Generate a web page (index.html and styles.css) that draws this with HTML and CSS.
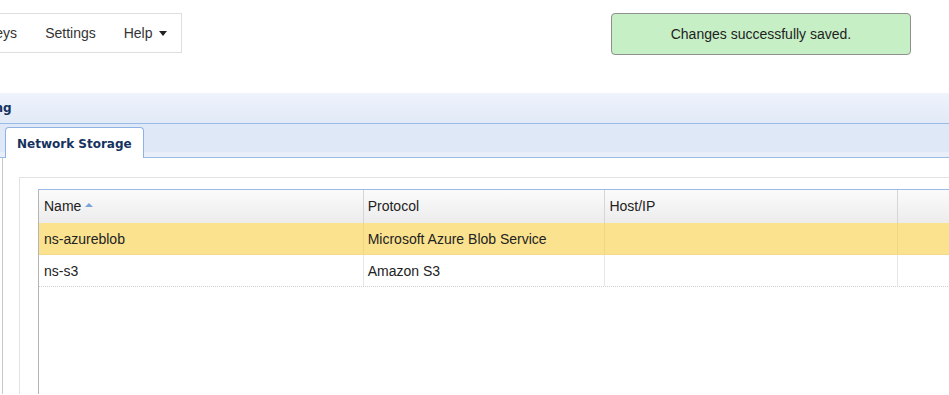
FILE: index.html
```html
<!doctype html>
<html>
<head>
    <meta charset="utf-8">
    <title>Network Storage</title>
    <link rel="stylesheet" href="styles.css">
</head>
<body>
    <div class="topbar">
        <ul class="menu">
            <li>Keys</li>
            <li>Settings</li>
            <li>Help <span class="caret"></span></li>
        </ul>
        <div class="notice">Changes successfully saved.</div>
    </div>

    <div class="panel-head"><span class="title">Tiering</span></div>
    <div class="tabstrip">
        <div class="tab">Network Storage</div>
    </div>

    <div class="panel-body">
        <div class="box">
            <div class="grid">
                <div class="grid-head">
                    <div class="cell c1">Name<span class="sort"></span></div>
                    <div class="cell c2">Protocol</div>
                    <div class="cell c3">Host/IP</div>
                    <div class="cell c4"></div>
                </div>
                <div class="row selected">
                    <div class="cell c1">ns-azureblob</div>
                    <div class="cell c2">Microsoft Azure Blob Service</div>
                    <div class="cell c3"></div>
                    <div class="cell c4"></div>
                </div>
                <div class="row">
                    <div class="cell c1">ns-s3</div>
                    <div class="cell c2">Amazon S3</div>
                    <div class="cell c3"></div>
                    <div class="cell c4"></div>
                </div>
            </div>
        </div>
    </div>
</body>
</html>
```

FILE: styles.css
```css
html, body {
    margin: 0;
    padding: 0;
}
body {
    background-color: white;
    font-family: "Liberation Sans", Arial, sans-serif;
    font-size: 14px;
    color: #222;
    overflow: hidden;
    height: 395px;
}
.topbar {
    display: flex;
    justify-content: space-between;
    align-items: flex-start;
    box-sizing: border-box;
    height: 93px;
    padding-top: 13px;
}
.menu {
    display: flex;
    list-style: none;
    margin: 0 0 0 -29px;
    padding: 0;
    border: 1px solid #dedede;
    height: 38px;
    color: #333;
}
.menu li {
    padding: 0 14px;
    line-height: 38px;
    display: flex;
    align-items: center;
}
.caret {
    display: inline-block;
    margin-left: 6px;
    width: 0;
    height: 0;
    border-left: 4px solid transparent;
    border-right: 4px solid transparent;
    border-top: 5px solid #222;
}
.notice {
    width: 300px;
    height: 42px;
    box-sizing: border-box;
    margin-right: 38px;
    background-color: #c6efc5;
    border: 1px solid #8f8f8f;
    border-radius: 4px;
    text-align: center;
    line-height: 40px;
    color: #1e1e1e;
}
.panel-head {
    height: 30px;
    background: linear-gradient(#eef3fc, #e2eaf7);
    border-bottom: 1px solid #99bbe8;
    overflow: hidden;
}
.title {
    display: inline-block;
    margin-left: -36px;
    font-family: "DejaVu Sans", Verdana, sans-serif;
    font-weight: bold;
    font-size: 12px;
    line-height: 30px;
    color: #15325e;
}
.tabstrip {
    display: flex;
    align-items: flex-end;
    height: 33px;
    padding-left: 5px;
    background: linear-gradient(#dfe8f6 0, #dfe8f6 28px, #e8eff9 28px);
    border-bottom: 1px solid #99bbe8;
}
.tab {
    height: 31px;
    box-sizing: border-box;
    margin-bottom: -1px;
    padding: 1px 11px 0;
    background-color: white;
    border: 1px solid #8db2e3;
    border-bottom: none;
    border-radius: 4px 4px 0 0;
    font-family: "DejaVu Sans", Verdana, sans-serif;
    font-weight: bold;
    font-size: 12px;
    line-height: 30px;
    color: #15325e;
}
.panel-body {
    box-sizing: border-box;
    margin-left: 2px;
    border-left: 1px solid #c8c8c8;
    padding: 19px 0 0 16px;
    height: 236px;
}
.box {
    box-sizing: border-box;
    border-top: 1px solid #e3e3e3;
    border-left: 1px solid #e3e3e3;
    padding: 11px 0 0 18px;
    height: 217px;
}
.grid {
    box-sizing: border-box;
    border-top: 1px solid #99bbe8;
    border-left: 1px solid #b4b4b4;
    height: 205px;
    width: 1000px;
}
.grid-head, .row {
    display: flex;
}
.grid-head {
    height: 33px;
    background: linear-gradient(#fbfbfb, #ececec);
}
.cell {
    box-sizing: border-box;
    padding-left: 5px;
    white-space: nowrap;
}
.grid-head .cell {
    line-height: 33px;
    border-right: 1px solid #d6d6d6;
}
.c1 { width: 325px; }
.c2 { width: 242px; padding-left: 4px; }
.c3 { width: 293px; padding-left: 4px; }
.c4 { width: 140px; }
.sort {
    display: inline-block;
    margin-left: 4px;
    vertical-align: middle;
    width: 0;
    height: 0;
    border-left: 4px solid transparent;
    border-right: 4px solid transparent;
    border-bottom: 4px solid #7ba3d6;
    position: relative;
    top: -2px;
}
.row {
    height: 32px;
    box-sizing: border-box;
    border-bottom: 1px dotted #cfcfcf;
}
.row .cell {
    line-height: 32px;
    border-right: 1px solid #e6e6e6;
}
.row.selected {
    background-color: #fbe28f;
    border-bottom: 1px solid #f4d98a;
}
.row.selected .cell {
    border-right-color: #eed789;
}
```
